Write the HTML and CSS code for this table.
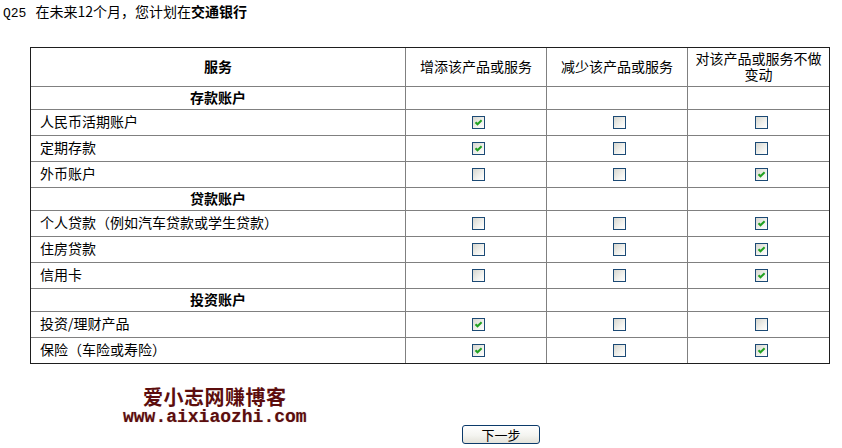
FILE: index.html
```html
<!DOCTYPE html>
<html lang="zh-CN">
<head>
<meta charset="utf-8">
<title>Q25</title>
<link rel="stylesheet" href="styles.css">
</head>
<body>
<div class="question"><span class="qno">Q25</span>在未来12个月，您计划在<b>交通银行</b></div>

<table class="grid">
  <colgroup>
    <col class="c-label"><col class="c-opt"><col class="c-opt"><col class="c-opt">
  </colgroup>
  <thead>
    <tr class="head">
      <th class="label-head">服务</th>
      <th class="opt-head">增添该产品或服务</th>
      <th class="opt-head">减少该产品或服务</th>
      <th class="opt-head last">对该产品或服务不做变动</th>
    </tr>
  </thead>
  <tbody>
    <tr class="cat"><td class="cat-name">存款账户</td><td></td><td></td><td class="last"></td></tr>
    <tr class="item"><td class="label">人民币活期账户</td>
      <td class="opt"><span class="cb on"><svg viewBox="0 0 11 11"><path d="M2.5 5.2 L4.5 7.3 L8.6 3.2"/></svg></span></td>
      <td class="opt"><span class="cb"></span></td>
      <td class="opt last"><span class="cb"></span></td></tr>
    <tr class="item"><td class="label">定期存款</td>
      <td class="opt"><span class="cb on"><svg viewBox="0 0 11 11"><path d="M2.5 5.2 L4.5 7.3 L8.6 3.2"/></svg></span></td>
      <td class="opt"><span class="cb"></span></td>
      <td class="opt last"><span class="cb"></span></td></tr>
    <tr class="item"><td class="label">外币账户</td>
      <td class="opt"><span class="cb"></span></td>
      <td class="opt"><span class="cb"></span></td>
      <td class="opt last"><span class="cb on"><svg viewBox="0 0 11 11"><path d="M2.5 5.2 L4.5 7.3 L8.6 3.2"/></svg></span></td></tr>
    <tr class="cat"><td class="cat-name">贷款账户</td><td></td><td></td><td class="last"></td></tr>
    <tr class="item"><td class="label">个人贷款（例如汽车贷款或学生贷款）</td>
      <td class="opt"><span class="cb"></span></td>
      <td class="opt"><span class="cb"></span></td>
      <td class="opt last"><span class="cb on"><svg viewBox="0 0 11 11"><path d="M2.5 5.2 L4.5 7.3 L8.6 3.2"/></svg></span></td></tr>
    <tr class="item"><td class="label">住房贷款</td>
      <td class="opt"><span class="cb"></span></td>
      <td class="opt"><span class="cb"></span></td>
      <td class="opt last"><span class="cb on"><svg viewBox="0 0 11 11"><path d="M2.5 5.2 L4.5 7.3 L8.6 3.2"/></svg></span></td></tr>
    <tr class="item"><td class="label">信用卡</td>
      <td class="opt"><span class="cb"></span></td>
      <td class="opt"><span class="cb"></span></td>
      <td class="opt last"><span class="cb on"><svg viewBox="0 0 11 11"><path d="M2.5 5.2 L4.5 7.3 L8.6 3.2"/></svg></span></td></tr>
    <tr class="cat"><td class="cat-name">投资账户</td><td></td><td></td><td class="last"></td></tr>
    <tr class="item"><td class="label">投资/理财产品</td>
      <td class="opt"><span class="cb on"><svg viewBox="0 0 11 11"><path d="M2.5 5.2 L4.5 7.3 L8.6 3.2"/></svg></span></td>
      <td class="opt"><span class="cb"></span></td>
      <td class="opt last"><span class="cb"></span></td></tr>
    <tr class="item final"><td class="label">保险（车险或寿险）</td>
      <td class="opt"><span class="cb on"><svg viewBox="0 0 11 11"><path d="M2.5 5.2 L4.5 7.3 L8.6 3.2"/></svg></span></td>
      <td class="opt"><span class="cb"></span></td>
      <td class="opt last"><span class="cb on"><svg viewBox="0 0 11 11"><path d="M2.5 5.2 L4.5 7.3 L8.6 3.2"/></svg></span></td></tr>
  </tbody>
</table>

<div class="footer">
  <div class="brand">
    <div class="brand-name">爱小志网赚博客</div>
    <div class="brand-url">www.aixiaozhi.com</div>
  </div>
  <div class="actions">
    <button class="next" type="button">下一步</button>
  </div>
</div>
</body>
</html>
```

FILE: styles.css
```css
html, body {
  margin: 0;
  padding: 0;
  background: #ffffff;
}

body {
  font-family: "Noto Sans CJK SC", "Noto Sans", sans-serif;
  color: #000;
  font-size: 14px;
}

.question {
  padding: 1px 0 0 3px;
  height: 21px;
  line-height: 20px;
  font-size: 14px;
}

.question .qno {
  font-family: "Liberation Mono", monospace;
  font-size: 13px;
  margin-right: 9px;
}

.question b {
  font-weight: 700;
}

.grid {
  margin: 25px 0 0 30px;
  width: 800px;
  table-layout: fixed;
  border-collapse: separate;
  border-spacing: 0;
  border: 1px solid #1e1e1e;
  font-size: 14px;
}

.c-label { width: 375px; }
.c-opt { width: 141px; }

.grid th,
.grid td {
  padding: 0;
  border-right: 1px solid #808080;
  border-bottom: 1px solid #808080;
  vertical-align: middle;
}

.grid .last {
  border-right: none;
}

.grid tr.final td {
  border-bottom: none;
}

.head { height: 39px; }
.cat { height: 23px; }
.item { height: 26px; }
.item.final { height: 25px; }

.label-head {
  font-weight: 700;
  text-align: center;
  padding-bottom: 3px !important;
}

.opt-head {
  font-weight: 400;
  text-align: center;
  line-height: 16px;
  padding: 0 6px 3px 6px !important;
}

.cat-name {
  font-weight: 700;
  text-align: center;
  line-height: 18px;
  padding-bottom: 3px !important;
}

.label {
  padding: 0 0 3px 9px !important;
  line-height: 18px;
}

.opt {
  padding-left: 5px !important;
  text-align: center;
}

.cb {
  display: block;
  margin: 0 auto;
  width: 13px;
  height: 13px;
  box-sizing: border-box;
  border: 1px solid #1c4a75;
  background: linear-gradient(135deg, #d6d6cf 0%, #f2f2ee 60%, #ffffff 100%);
}

.cb svg {
  display: block;
  width: 11px;
  height: 11px;
}

.cb path {
  fill: none;
  stroke: #21a121;
  stroke-width: 2;
  stroke-linecap: butt;
  stroke-linejoin: miter;
}

.footer {
  margin-top: 22px;
}

.brand {
  margin-left: 143px;
  color: #5c0d0d;
}

.brand-name {
  font-size: 20px;
  font-weight: 700;
  line-height: 22px;
  letter-spacing: 0.5px;
}

.brand-url {
  margin-left: -20px;
  font-family: "Liberation Mono", monospace;
  font-size: 18px;
  font-weight: 700;
  line-height: 19px;
  text-shadow: 0 0 1px rgba(92, 13, 13, 0.35);
}

.actions {
  padding-left: 462px;
  margin-top: -3px;
}

.next {
  width: 78px;
  height: 19px;
  padding: 0;
  margin: 0;
  font-family: "Noto Sans CJK SC", sans-serif;
  font-size: 13px;
  line-height: 17px;
  color: #000;
  border: 1px solid #0b3a6a;
  border-radius: 3px;
  background: linear-gradient(#ffffff 0%, #f4f4f0 55%, #e3e2d9 100%);
}
```
